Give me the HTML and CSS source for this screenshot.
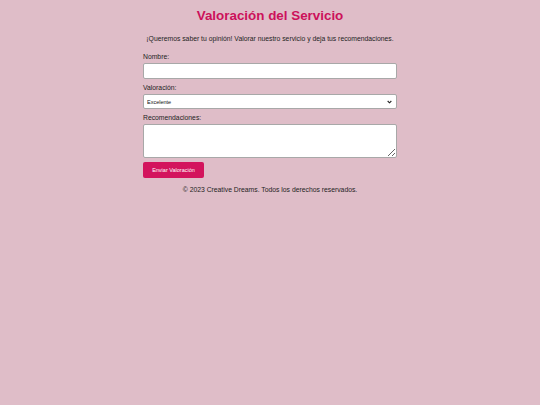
FILE: index.html
```html
<!DOCTYPE html>
<html lang="es">
<head>
<meta charset="utf-8">
<title>Valoración del Servicio</title>
<link rel="stylesheet" href="styles.css">
</head>
<body>
<div class="container">
  <h1 class="title">Valoración del Servicio</h1>
  <p class="intro">¡Queremos saber tu opinión! Valorar nuestro servicio y deja tus recomendaciones.</p>
  <form class="form">
    <label class="label" for="nombre">Nombre:</label>
    <input class="field input" id="nombre" type="text">
    <label class="label" for="valoracion">Valoración:</label>
    <select class="field select" id="valoracion">
      <option>Excelente</option>
      <option>Bueno</option>
      <option>Regular</option>
      <option>Malo</option>
    </select>
    <label class="label" for="rec">Recomendaciones:</label>
    <textarea class="field textarea" id="rec"></textarea>
    <button class="btn" type="button">Enviar Valoración</button>
  </form>
  <p class="footer">© 2023 Creative Dreams. Todos los derechos reservados.</p>
</div>
</body>
</html>
```
FILE: styles.css
```css
html, body {
  margin: 0;
  padding: 0;
  background: #dfbdc8;
}
body {
  font-family: "Liberation Sans", Arial, sans-serif;
  color: #1e1e1e;
}
.container {
  width: 254px;
  margin: 0 auto;
  padding-top: 8px;
}
.title {
  margin: 0;
  text-align: center;
  font-size: 13.4px;
  line-height: 16px;
  font-weight: bold;
  color: #cc115b;
}
.intro {
  margin: 11px 0 0;
  text-align: center;
  font-size: 6.8px;
  line-height: 8px;
}
.form {
  display: flex;
  flex-direction: column;
  margin-top: 10px;
}
.label {
  font-size: 6.8px;
  line-height: 8px;
  margin-bottom: 2px;
}
.field {
  box-sizing: border-box;
  width: 100%;
  background: #fff;
  border: 1px solid #a8a8a8;
  border-radius: 2px;
  margin: 0 0 5px;
  font-family: "Liberation Sans", Arial, sans-serif;
}
.input {
  height: 16px;
}
.select {
  height: 15px;
  font-size: 5.5px;
  padding: 0 0 0 3px;
  color: #111;
  appearance: none;
  -webkit-appearance: none;
  background-image: url("data:image/svg+xml;utf8,<svg xmlns='http://www.w3.org/2000/svg' width='6' height='4' viewBox='0 0 6 4'><path d='M0.8 0.8 L3 3 L5.2 0.8' fill='none' stroke='%23222' stroke-width='1.3'/></svg>");
  background-repeat: no-repeat;
  background-position: right 4px center;
  background-size: 5px 4px;
}
.textarea {
  height: 34px;
  resize: vertical;
  margin-bottom: 4px;
}
.btn {
  align-self: flex-start;
  width: 61px;
  height: 16px;
  background: #d3145d;
  color: #fff;
  border: none;
  border-radius: 2px;
  font-family: "Liberation Sans", Arial, sans-serif;
  font-size: 5.5px;
  padding: 0;
}
.footer {
  margin: 8px 0 0;
  text-align: center;
  font-size: 6.8px;
  line-height: 8px;
}
```
